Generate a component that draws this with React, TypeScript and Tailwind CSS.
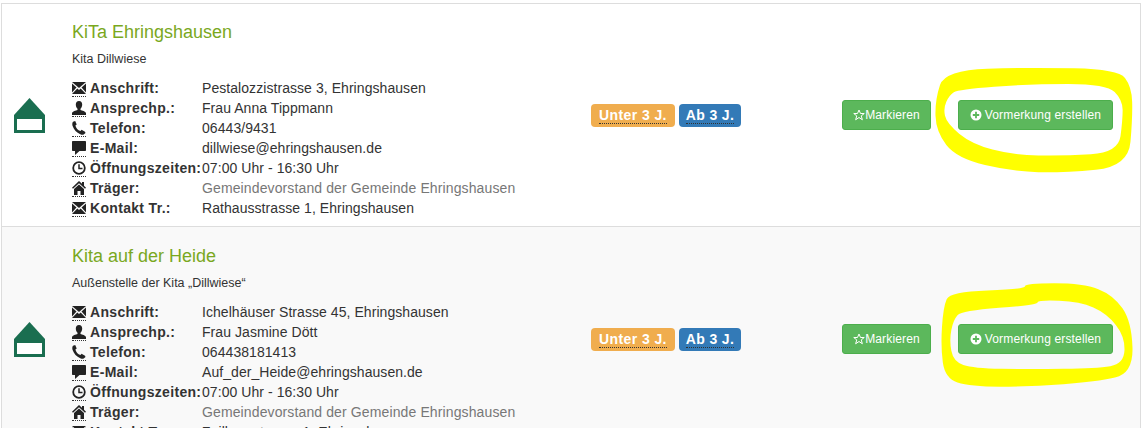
import React from "react";

const Envelope = () => (
  <svg viewBox="0 0 14 12" className="w-[14px] h-[12px] fill-[#222]">
    <path d="M0 0h14L7 6z" />
    <path d="M0 1.500V10.500L4.500 5.500z" />
    <path d="M14 1.500V10.500L9.500 5.500z" />
    <path d="M0 12L5.300 6.400 7 8l1.700-1.600L14 12z" />
  </svg>
);
const User = () => (
  <svg viewBox="0 0 14 14" className="w-[14px] h-[14px] fill-[#222]">
    <path d="M7 0c2.200 0 3.200 1.700 3.200 3.600 0 1.600-.8 3.400-1.700 4.200v1.100c1.600.6 5 1.300 5.500 3.100V14H0v-2c.5-1.800 3.900-2.500 5.500-3.100V7.800C4.600 7 3.800 5.200 3.800 3.600 3.800 1.700 4.800 0 7 0z" />
  </svg>
);
const Phone = () => (
  <svg viewBox="0 0 14 14" className="w-[14px] h-[14px] fill-[#222]">
    <path d="M1 .8L3.200 0l1.500 3.400-1.300 1c.6 2.600 2.400 4.600 5 5.600l1.200-1.200 3.400 1.900.5 1.200-1.800 1.600c-.8.6-2.200.4-3.400-.2C4.600 11.700 1.800 8.600.6 5 .1 3.400.2 1.700 1 .8z" />
  </svg>
);
const Comment = () => (
  <svg viewBox="0 0 14 14" className="w-[14px] h-[14px] fill-[#222]">
    <path d="M1 0h12c.6 0 1 .4 1 1v8c0 .6-.4 1-1 1H7.500L3 14v-4H1c-.6 0-1-.4-1-1V1c0-.6.4-1 1-1z" />
  </svg>
);
const Clock = () => (
  <svg viewBox="0 0 14 14" className="w-[14px] h-[14px] fill-none stroke-[#222]">
    <circle cx="7" cy="7" r="5.800" strokeWidth="1.800" />
    <path d="M7 3.200V7.500H10.500" strokeWidth="1.500" />
  </svg>
);
const HomeIcon = () => (
  <svg viewBox="0 0 14 14" className="w-[14px] h-[14px] fill-[#222]">
    <path d="M7 0l3 2.800V1h2v3.700L14 6.700 13 7.700 7 2.200 1 7.700 0 6.700z" />
    <path d="M7 3.500L12 8v6H8.500v-4h-3v4H2V8z" />
  </svg>
);

const House = () => (
  <svg viewBox="0 0 31 35" className="w-[31px] h-[35px]">
    <path d="M15.500 0L31 17V35H0V17z" fill="#1a6e50" />
    <rect x="3" y="21" width="25" height="11" fill="#fff" />
  </svg>
);

// closed smooth curve through the midpoints of the polygon sides
const smooth = (pts: number[][]) => {
  const mid = (a: number[], b: number[]) => [(a[0] + b[0]) / 2, (a[1] + b[1]) / 2];
  const start = mid(pts[pts.length - 1], pts[0]);
  let d = `M${start[0]} ${start[1]}`;
  pts.forEach((p, i) => {
    const m = mid(p, pts[(i + 1) % pts.length]);
    d += `Q${p[0]} ${p[1]} ${m[0]} ${m[1]}`;
  });
  return d + "Z";
};

const ringOneOuter = [[45, 30], [300, 22], [565, 28], [605, 80], [608, 170], [595, 320], [400, 338], [250, 335], [80, 295], [18, 215], [15, 120]];
const ringOneInner = [[85, 88], [300, 72], [530, 72], [578, 120], [578, 180], [565, 278], [400, 288], [250, 285], [125, 252], [50, 190], [40, 145], [58, 105]];
const ringTwoOuter = [[60, 35], [285, 28], [285, 10], [460, 10], [550, 45], [605, 125], [610, 280], [500, 305], [300, 320], [120, 320], [45, 295], [32, 200], [40, 80]];
const ringTwoInner = [[95, 92], [320, 75], [325, 60], [450, 65], [530, 100], [585, 170], [582, 252], [500, 265], [300, 268], [130, 265], [70, 245], [58, 180], [70, 120]];

type Line = { icon: React.ReactNode; label: string; value: string; muted?: boolean };

const Info = ({ icon, label, value, muted }: Line) => (
  <div className="flex h-5 items-center">
    <span className="w-[130px] shrink-0 flex items-center gap-[4px] whitespace-nowrap">
      <span className="w-[14px] h-[17px] border-b border-dotted border-[#333] flex items-center justify-center">{icon}</span>
      <b className="tracking-[0.32px] text-[#333]">{label}</b>
    </span>
    <span className={muted ? "text-[#777] whitespace-nowrap tracking-[0.12px]" : "text-[#333] whitespace-nowrap tracking-[0.06px]"}>{value}</span>
  </div>
);

const Entry = ({ title, sub, lines, striped }: { title: string; sub: string; lines: Line[]; striped?: boolean }) => (
  <div className={`flex items-center border-b border-[#ddd] shrink-0 ${striped ? "h-[224px] border-t border-t-[#f9f9f9] bg-[#f9f9f9]" : "h-[223px] bg-white"}`}>
    <div className="w-[70px] pl-[12px] shrink-0 flex">
      <House />
    </div>
    <div className="w-[519px] shrink-0 pt-[8px] h-full">
      <h4 className="text-[18px] leading-5 mt-[10px] text-[#7aa81e]">{title}</h4>
      <p className="text-[12.5px] leading-4 mt-[9px] mb-[11px] text-[#333]">{sub}</p>
      {lines.map((l) => (
        <Info key={l.label} {...l} />
      ))}
    </div>
    <div className="w-[251px] shrink-0 flex gap-[4px] mt-[1px] text-[14px] font-bold text-white">
      <span className="h-[23px] w-[84px] rounded bg-[#f0ad4e] flex items-center justify-center tracking-[0.4px]">
        <span className="border-b border-dotted border-[#333] leading-[15px]">Unter 3 J.</span>
      </span>
      <span className="h-[23px] w-[62px] rounded bg-[#337ab7] flex items-center justify-center tracking-[0.4px]">
        <span className="border-b border-dotted border-[#333] leading-[15px]">Ab 3 J.</span>
      </span>
    </div>
    <div className="flex gap-[27px] text-[12px] text-white tracking-[0.15px]">
      <button className="h-[30px] w-[89px] rounded-[3px] bg-[#5cb85c] border border-[#4cae4c] flex items-center justify-center">
        <svg viewBox="0 0 24 24" className="w-[12px] h-[12px] fill-none stroke-white stroke-2">
          <path d="M12 2l3 7h7.500l-6 4.800 2.200 7.700L12 17l-6.700 4.500 2.200-7.700-6-4.800H9z" />
        </svg>
        Markieren
      </button>
      <button className="h-[30px] w-[155px] rounded-[3px] bg-[#5cb85c] border border-[#4cae4c] flex items-center justify-center gap-[3px]">
        <svg viewBox="0 0 12 12" className="w-[12px] h-[12px]">
          <circle cx="6" cy="6" r="5.500" fill="#fff" />
          <path d="M6 2.800V9.200M2.800 6H9.200" stroke="#5cb85c" strokeWidth="1.800" />
        </svg>
        Vormerkung erstellen
      </button>
    </div>
  </div>
);

const first: Line[] = [
  { icon: <Envelope />, label: "Anschrift:", value: "Pestalozzistrasse 3, Ehringshausen" },
  { icon: <User />, label: "Ansprechp.:", value: "Frau Anna Tippmann" },
  { icon: <Phone />, label: "Telefon:", value: "06443/9431" },
  { icon: <Comment />, label: "E-Mail:", value: "dillwiese@ehringshausen.de" },
  { icon: <Clock />, label: "Öffnungszeiten:", value: "07:00 Uhr - 16:30 Uhr" },
  { icon: <HomeIcon />, label: "Träger:", value: "Gemeindevorstand der Gemeinde Ehringshausen", muted: true },
  { icon: <Envelope />, label: "Kontakt Tr.:", value: "Rathausstrasse 1, Ehringshausen" },
];

const second: Line[] = [
  { icon: <Envelope />, label: "Anschrift:", value: "Ichelhäuser Strasse 45, Ehringshausen" },
  { icon: <User />, label: "Ansprechp.:", value: "Frau Jasmine Dött" },
  { icon: <Phone />, label: "Telefon:", value: "064438181413" },
  { icon: <Comment />, label: "E-Mail:", value: "Auf_der_Heide@ehringshausen.de" },
  { icon: <Clock />, label: "Öffnungszeiten:", value: "07:00 Uhr - 16:30 Uhr" },
  { icon: <HomeIcon />, label: "Träger:", value: "Gemeindevorstand der Gemeinde Ehringshausen", muted: true },
  { icon: <Envelope />, label: "Kontakt Tr.:", value: "Zeilbornstrasse 1, Ehringshausen" },
];

export default function App() {
  return (
    <div className="relative h-[428px] w-[1146px] overflow-hidden bg-white text-[14px] font-['Liberation_Sans',Arial,sans-serif]">
      <div className="ml-[1px] mt-[3px] w-[1140px] border-l border-r border-t border-[#ddd]">
        <Entry title="KiTa Ehringshausen" sub="Kita Dillwiese" lines={first} />
        <Entry title="Kita auf der Heide" sub="Außenstelle der Kita „Dillwiese“" lines={second} striped />
      </div>
      {/* marker scribbles drawn over the screenshot */}
      <svg className="absolute inset-0 pointer-events-none" width="1146" height="428" viewBox="0 0 1146 428">
        <path
          transform="translate(930 60) scale(0.3333)"
          fill="#ffff00"
          fillRule="evenodd"
          d={smooth(ringOneOuter) + smooth(ringOneInner)}
        />
        <path
          transform="translate(930 280) scale(0.3333)"
          fill="#ffff00"
          fillRule="evenodd"
          d={smooth(ringTwoOuter) + smooth(ringTwoInner)}
        />
      </svg>
    </div>
  );
}
